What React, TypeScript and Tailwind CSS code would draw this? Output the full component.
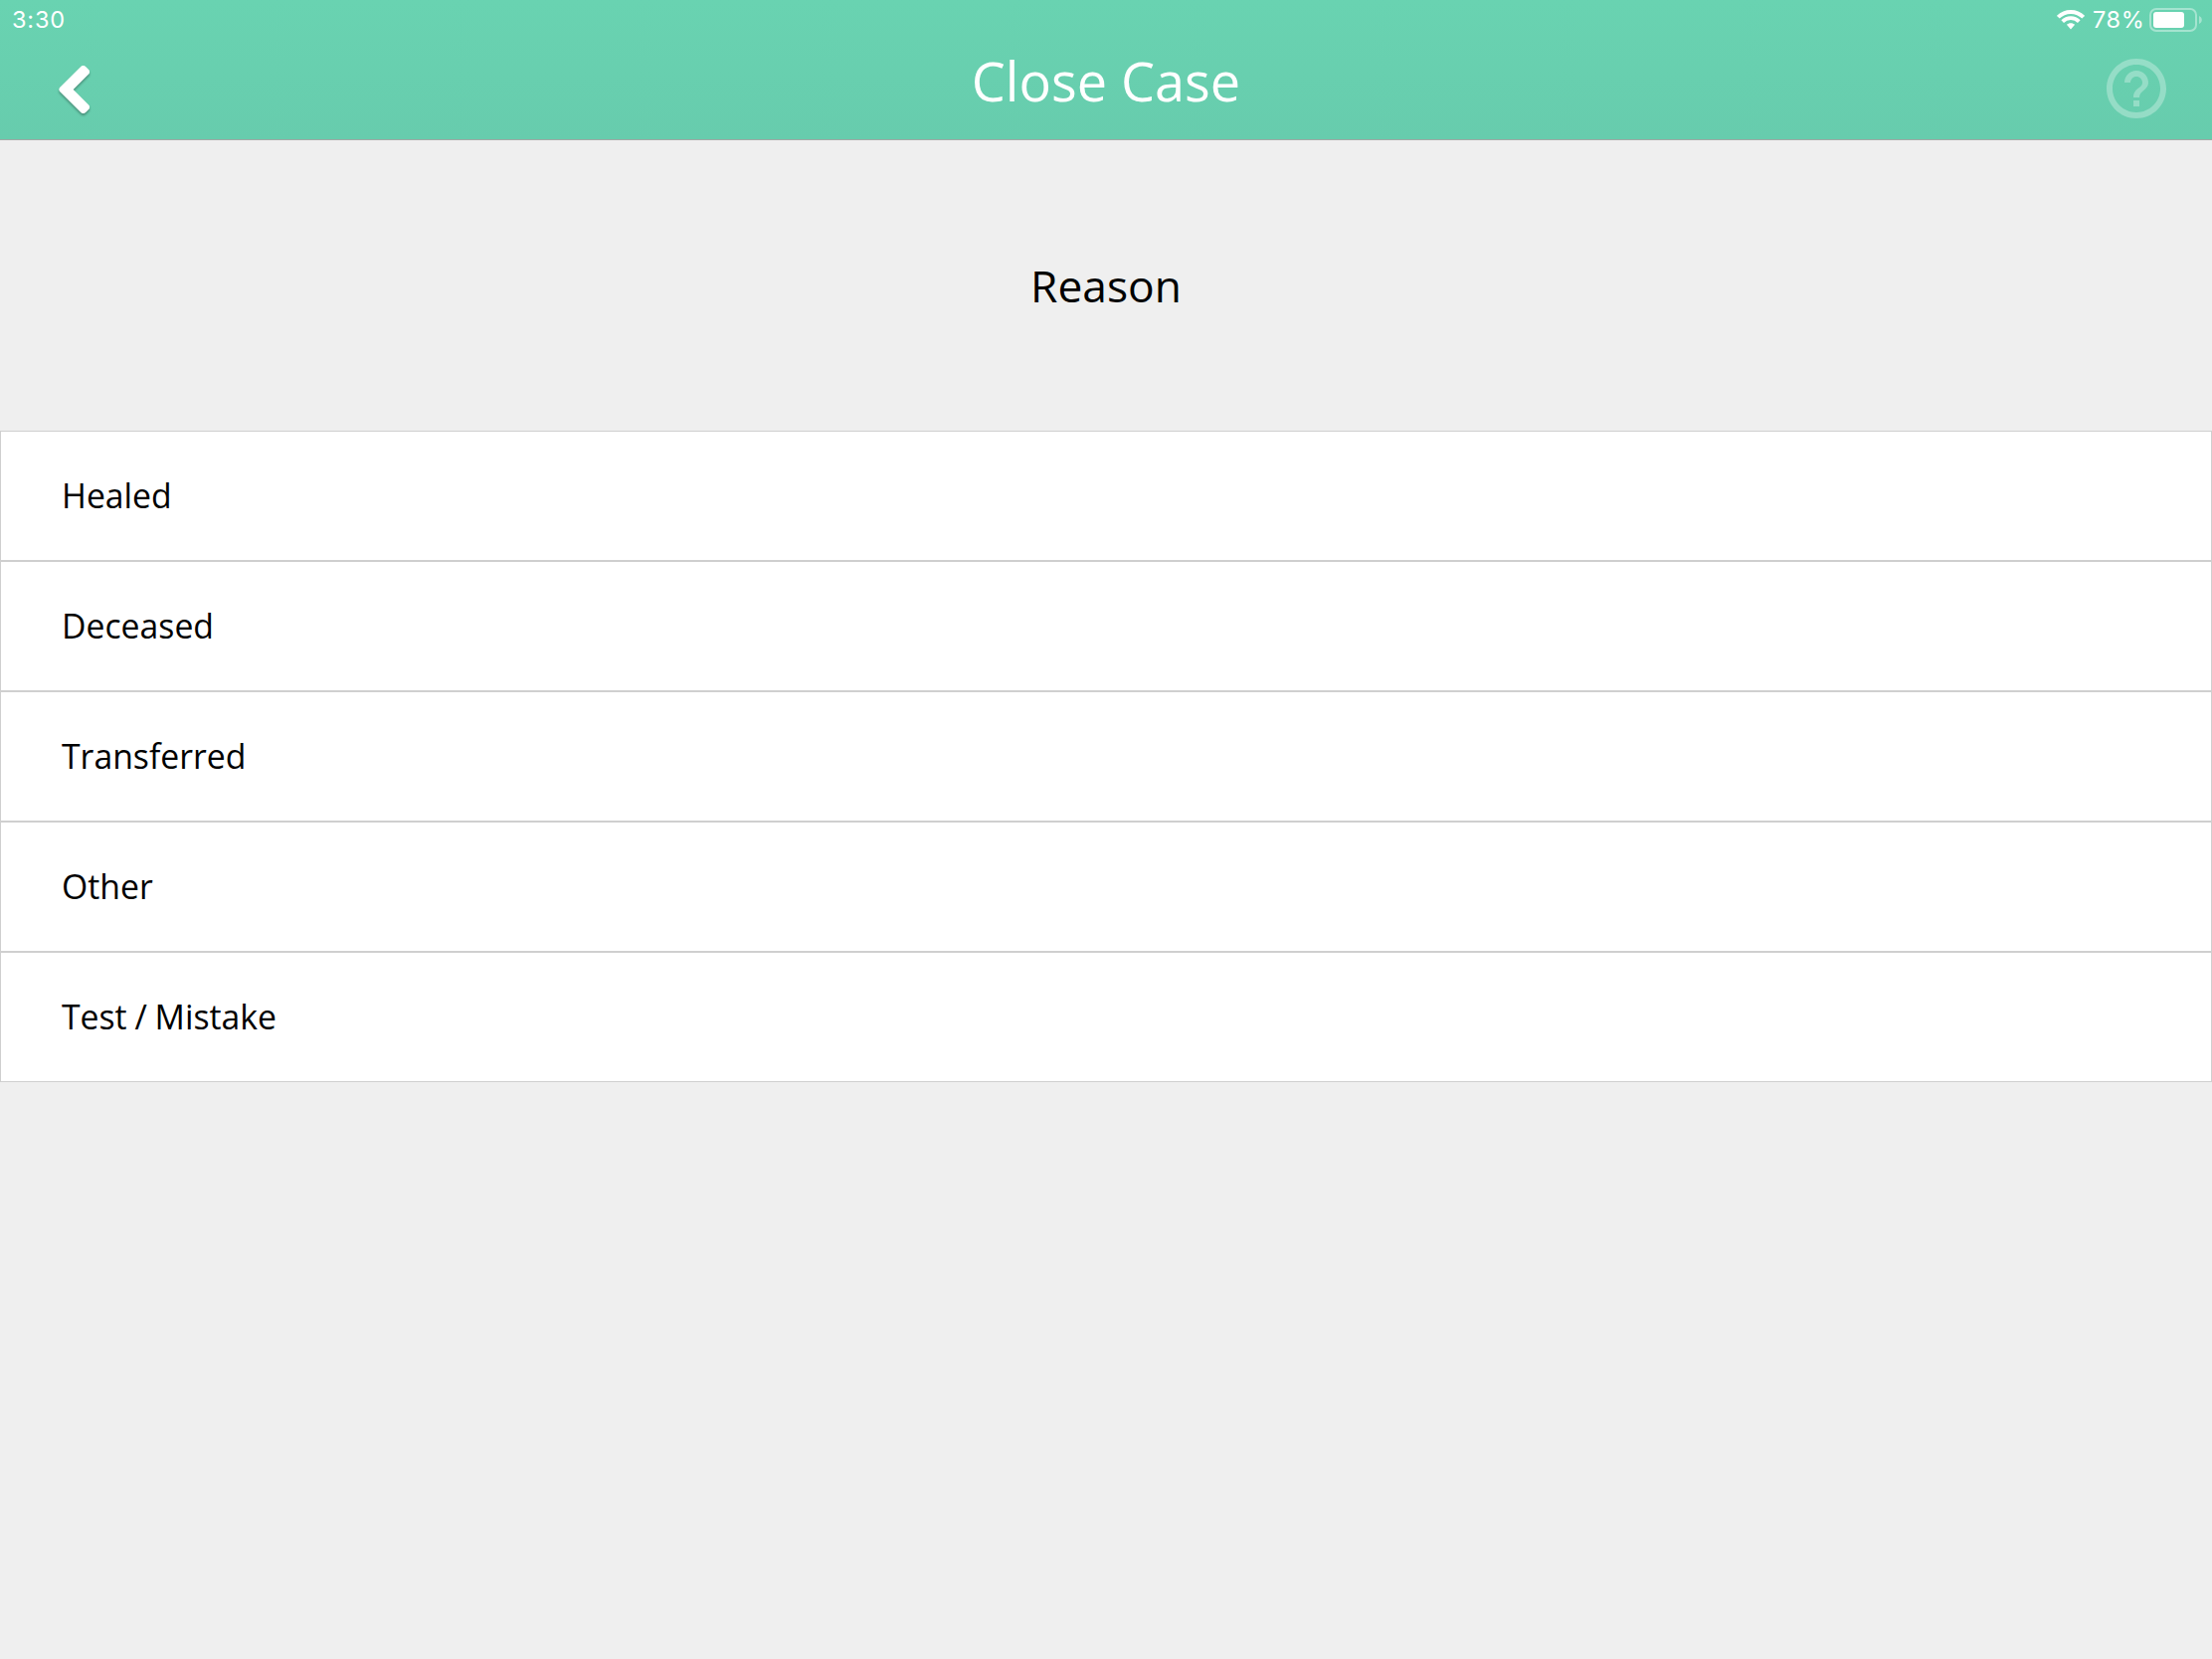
import React from "react";

const reasons = ["Healed", "Deceased", "Transferred", "Other", "Test / Mistake"];

function WifiIcon() {
  return (
    <svg width="28" height="22" viewBox="0 0 28 22" fill="none" stroke="#fff">
      <path d="M1.3 8.2a18 18 0 0 1 25.4 0" strokeWidth="3.9" />
      <path d="M5.7 12.6a11.8 11.8 0 0 1 16.6 0" strokeWidth="3.7" />
      <path d="M14 14.2c-1.6 0-3 .6-4.1 1.6L14 20.4l4.1-4.6c-1.1-1-2.5-1.6-4.1-1.6z" fill="#fff" stroke="none" />
    </svg>
  );
}

function BatteryIcon() {
  return (
    <svg width="53" height="24" viewBox="0 0 53 24">
      <rect x="1" y="1" width="46" height="22" rx="6" fill="none" stroke="#fff" strokeOpacity="0.4" strokeWidth="2" />
      <rect x="4" y="4" width="31" height="16" rx="3" fill="#fff" />
      <path d="M50 8c1.7.7 2.8 2.2 2.8 4s-1.1 3.3-2.8 4z" fill="#fff" fillOpacity="0.4" />
    </svg>
  );
}

function BackIcon() {
  return (
    <svg width="48" height="60" viewBox="50 60 48 60" className="drop-shadow-[0_2px_1px_rgba(0,0,0,0.3)]">
      <path
        d="M63 90 L83.7 69.5 L86.5 72.2 L68.7 90 L86.5 107.8 L83.7 110.5 Z"
        fill="#fff"
        stroke="#fff"
        strokeWidth="7"
        strokeLinejoin="round"
      />
    </svg>
  );
}

function HelpIcon() {
  return (
    <svg width="72" height="72" viewBox="0 0 24 24" fill="#fff" fillOpacity="0.3">
      <path d="M11 18h2v-2h-2v2zm1-16C6.48 2 2 6.48 2 12s4.48 10 10 10 10-4.48 10-10S17.52 2 12 2zm0 18c-4.41 0-8-3.59-8-8s3.59-8 8-8 8 3.59 8 8-3.59 8-8 8zm0-14c-2.21 0-4 1.79-4 4h2c0-1.1.9-2 2-2s2 .9 2 2c0 2-3 1.75-3 5h2c0-2.25 3-2.5 3-5 0-2.21-1.79-4-4-4z" />
    </svg>
  );
}

export default function App() {
  return (
    <main className="flex h-screen w-full flex-col bg-[#efefef] font-['Open_Sans',sans-serif] text-black">
      <header className="h-[141px] border-b border-[#a3a8a6] bg-linear-to-b from-[#69d3b1] to-[#67ccad] text-white">
        <div className="flex h-10 items-center justify-between pl-[12px] pr-[10px] font-['Inter',sans-serif] text-[23.5px] leading-none">
          <span className="tracking-[0.8px]">3:30</span>
          <div className="flex items-center">
            <WifiIcon />
            <span className="ml-[8px] mr-[5px] w-[52px] whitespace-nowrap tracking-[0.6px]">78%</span>
            <BatteryIcon />
          </div>
        </div>
        <div className="flex items-start justify-between px-[40px]">
          <button className="mt-[20px] w-[72px] pl-[10px]">
            <BackIcon />
          </button>
          <h1 className="mt-[4px] text-[54px] leading-[74px]">Close Case</h1>
          <button className="mt-[13px]">
            <HelpIcon />
          </button>
        </div>
      </header>

      <h2 className="flex h-[292px] items-center justify-center text-[44.3px]">Reason</h2>

      <ul>
        {reasons.map((reason) => (
          <li
            key={reason}
            className="flex h-[131px] items-center border border-[#cfcfcf] bg-white pl-[61px] text-[33.75px] [word-spacing:-1px]"
          >
            {reason}
          </li>
        ))}
      </ul>
    </main>
  );
}
